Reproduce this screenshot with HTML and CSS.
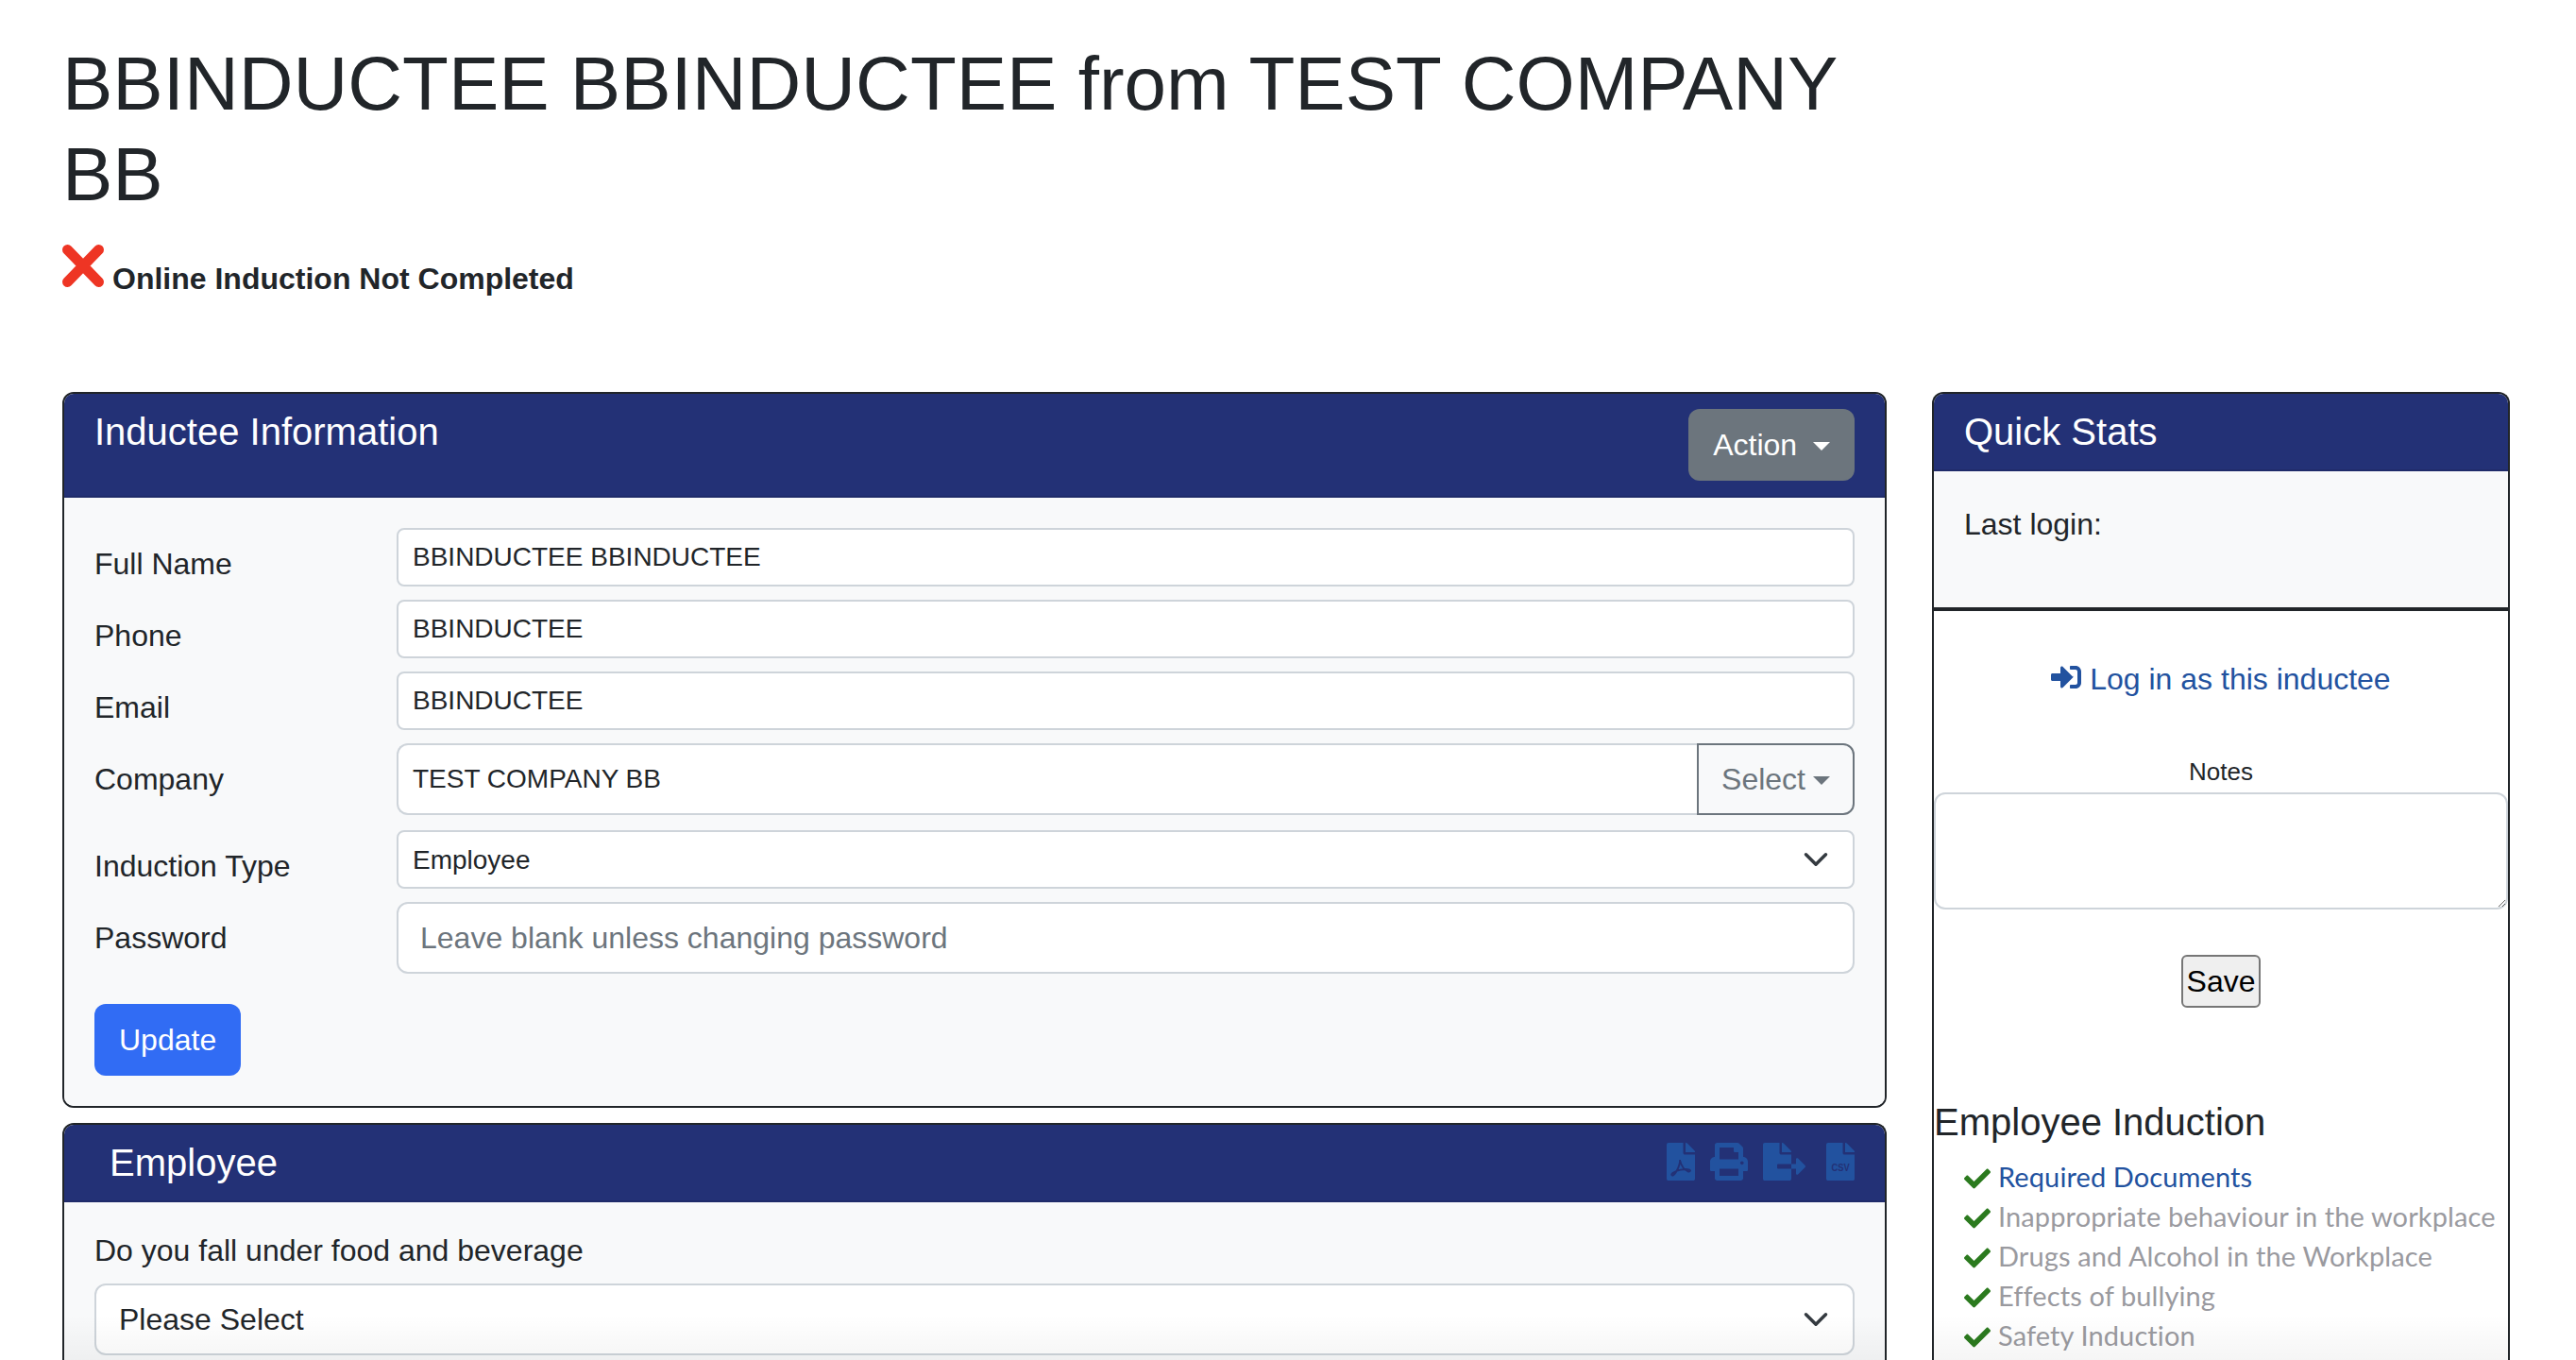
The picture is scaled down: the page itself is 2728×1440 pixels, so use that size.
FILE: index.html
```html
<!DOCTYPE html>
<html lang="en">
<head>
<meta charset="utf-8">
<title>Inductee</title>
<link rel="stylesheet" href="styles.css">
</head>
<body>
<main class="page">
  <header class="intro">
    <h1>BBINDUCTEE BBINDUCTEE from TEST COMPANY BB</h1>
    <p class="status">
      <svg class="status-x" viewBox="0 0 44 45"><path d="M5.5 5.5 38.5 39.5M38.5 5.5 5.5 39.5"/></svg>
      <strong>Online Induction Not Completed</strong>
    </p>
  </header>
  <div class="columns">
    <div class="col-main">
      <section class="card">
        <div class="card-head head-top">
          <h2>Inductee Information</h2>
          <button class="btn btn-grey" type="button">Action <span class="caret"></span></button>
        </div>
        <form class="card-body">
          <div class="row"><label>Full Name</label><input class="ctl ctl-sm" type="text" value="BBINDUCTEE BBINDUCTEE"></div>
          <div class="row"><label>Phone</label><input class="ctl ctl-sm" type="text" value="BBINDUCTEE"></div>
          <div class="row"><label>Email</label><input class="ctl ctl-sm" type="text" value="BBINDUCTEE"></div>
          <div class="row row-group">
            <label>Company</label>
            <div class="group">
              <input class="ctl ctl-sm ctl-group" type="text" value="TEST COMPANY BB">
              <button class="btn btn-outline" type="button">Select<span class="caret"></span></button>
            </div>
          </div>
          <div class="row">
            <label>Induction Type</label>
            <div class="select-wrap">
              <select class="ctl ctl-sm"><option>Employee</option></select>
              <svg class="chev" viewBox="0 0 16 16"><path d="M2 5l6 6 6-6"/></svg>
            </div>
          </div>
          <div class="row"><label>Password</label><input class="ctl ctl-lg ctl-pass" type="password" placeholder="Leave blank unless changing password"></div>
          <button class="btn btn-blue" type="button">Update</button>
        </form>
      </section>

      <section class="card card-open card-second">
        <div class="card-head head-emp">
          <h2>Employee</h2>
          <div class="tools">
            <svg class="tool" viewBox="0 0 384 512"><path d="M224 136V0H24C10.7 0 0 10.7 0 24v464c0 13.3 10.7 24 24 24h336c13.3 0 24-10.7 24-24V160H248c-13.2 0-24-10.8-24-24zM377 105L279.1 7c-4.5-4.5-10.6-7-17-7H256v128h128v-6.1c0-6.3-2.5-12.4-7-16.9z"/><path class="pdf-mark" d="M178 232c12 50-40 170-88 205-22 16-34-10-8-28 52-36 160-62 220-46 30 8 18 34-14 24-50-16-90-80-110-155z"/></svg>
            <svg class="tool" viewBox="0 0 512 512"><path d="M448 192V77.25c0-8.49-3.37-16.62-9.37-22.63L393.37 9.37c-6-6-14.14-9.37-22.63-9.37H96C78.33 0 64 14.33 64 32v160c-35.35 0-64 28.65-64 64v112c0 8.84 7.16 16 16 16h48v96c0 17.67 14.33 32 32 32h320c17.67 0 32-14.33 32-32v-96h48c8.84 0 16-7.16 16-16V256c0-35.35-28.65-64-64-64zm-64 256H128v-96h256v96zm0-224H128V64h192v48c0 8.84 7.16 16 16 16h48v96zm48 72c-13.25 0-24-10.75-24-24 0-13.26 10.75-24 24-24s24 10.74 24 24c0 13.25-10.75 24-24 24z"/></svg>
            <svg class="tool" viewBox="0 0 576 512"><path d="M384 121.9c0-6.3-2.5-12.4-7-16.9L279.1 7c-4.5-4.5-10.6-7-17-7H256v128h128zM571 308l-95.7-96.4c-10.1-10.1-27.4-3-27.4 11.3V288h-64v64h64v65.2c0 14.3 17.3 21.4 27.4 11.3L571 332c6.6-6.6 6.6-17.4 0-24zm-379 28v-32c0-8.8 7.2-16 16-16h176V160H248c-13.2 0-24-10.8-24-24V0H24C10.7 0 0 10.7 0 24v464c0 13.3 10.7 24 24 24h336c13.3 0 24-10.7 24-24V352H208c-8.8 0-16-7.2-16-16z"/></svg>
            <svg class="tool tool-csv" viewBox="0 0 384 512"><path d="M224 136V0H24C10.7 0 0 10.7 0 24v464c0 13.3 10.7 24 24 24h336c13.3 0 24-10.7 24-24V160H248c-13.2 0-24-10.8-24-24zM377 105L279.1 7c-4.5-4.5-10.6-7-17-7H256v128h128v-6.1c0-6.3-2.5-12.4-7-16.9z"/><text class="csv-mark" x="70" y="384" textLength="245" lengthAdjust="spacingAndGlyphs">CSV</text></svg>
          </div>
        </div>
        <div class="card-body body-emp">
          <label class="stack-label">Do you fall under food and beverage</label>
          <div class="select-wrap">
            <select class="ctl ctl-lg"><option>Please Select</option></select>
            <svg class="chev" viewBox="0 0 16 16"><path d="M2 5l6 6 6-6"/></svg>
          </div>
        </div>
      </section>
    </div>

    <aside class="card card-open col-side">
      <div class="card-head"><h2>Quick Stats</h2></div>
      <div class="stats">Last login:</div>
      <div class="side-rest">
        <a class="login-link" href="#">
          <svg class="login-icon" viewBox="0 0 512 512"><path d="M416 448h-84c-6.6 0-12-5.4-12-12v-40c0-6.6 5.4-12 12-12h84c17.7 0 32-14.3 32-32V160c0-17.7-14.3-32-32-32h-84c-6.6 0-12-5.4-12-12V76c0-6.6 5.4-12 12-12h84c53 0 96 43 96 96v192c0 53-43 96-96 96zm-47-201L201 79c-15-15-41-4.5-41 17v96H24c-13.3 0-24 10.7-24 24v80c0 13.3 10.7 24 24 24h136v96c0 21.4 25.9 32 41 17l168-168c9.3-9.4 9.3-24.6 0-34z"/></svg>
          Log in as this inductee
        </a>
        <label class="notes-label">Notes</label>
        <textarea class="notes"></textarea>
        <button class="save" type="button">Save</button>
        <h3>Employee Induction</h3>
        <ul class="checklist">
          <li><svg class="check" viewBox="0 0 512 512"><path d="M173.898 439.404l-166.4-166.4c-9.997-9.997-9.997-26.206 0-36.204l36.203-36.204c9.997-9.998 26.207-9.998 36.204 0L192 312.69 432.095 72.596c9.997-9.997 26.207-9.997 36.204 0l36.203 36.204c9.997 9.997 9.997 26.206 0 36.204l-294.4 294.401c-9.998 9.997-26.207 9.997-36.204-.001z"/></svg><a href="#">Required Documents</a></li>
          <li><svg class="check" viewBox="0 0 512 512"><path d="M173.898 439.404l-166.4-166.4c-9.997-9.997-9.997-26.206 0-36.204l36.203-36.204c9.997-9.998 26.207-9.998 36.204 0L192 312.69 432.095 72.596c9.997-9.997 26.207-9.997 36.204 0l36.203 36.204c9.997 9.997 9.997 26.206 0 36.204l-294.4 294.401c-9.998 9.997-26.207 9.997-36.204-.001z"/></svg>Inappropriate behaviour in the workplace</li>
          <li><svg class="check" viewBox="0 0 512 512"><path d="M173.898 439.404l-166.4-166.4c-9.997-9.997-9.997-26.206 0-36.204l36.203-36.204c9.997-9.998 26.207-9.998 36.204 0L192 312.69 432.095 72.596c9.997-9.997 26.207-9.997 36.204 0l36.203 36.204c9.997 9.997 9.997 26.206 0 36.204l-294.4 294.401c-9.998 9.997-26.207 9.997-36.204-.001z"/></svg>Drugs and Alcohol in the Workplace</li>
          <li><svg class="check" viewBox="0 0 512 512"><path d="M173.898 439.404l-166.4-166.4c-9.997-9.997-9.997-26.206 0-36.204l36.203-36.204c9.997-9.998 26.207-9.998 36.204 0L192 312.69 432.095 72.596c9.997-9.997 26.207-9.997 36.204 0l36.203 36.204c9.997 9.997 9.997 26.206 0 36.204l-294.4 294.401c-9.998 9.997-26.207 9.997-36.204-.001z"/></svg>Effects of bullying</li>
          <li><svg class="check" viewBox="0 0 512 512"><path d="M173.898 439.404l-166.4-166.4c-9.997-9.997-9.997-26.206 0-36.204l36.203-36.204c9.997-9.998 26.207-9.998 36.204 0L192 312.69 432.095 72.596c9.997-9.997 26.207-9.997 36.204 0l36.203 36.204c9.997 9.997 9.997 26.206 0 36.204l-294.4 294.401c-9.998 9.997-26.207 9.997-36.204-.001z"/></svg>Safety Induction</li>
        </ul>
      </div>
    </aside>
  </div>
</main>
</body>
</html>
```

FILE: styles.css
```css
* { box-sizing: border-box; }
html, body { margin: 0; height: 1440px; overflow: hidden; }
body {
  background: #fff;
  color: #212529;
  font-family: "Liberation Sans", Arial, sans-serif;
  font-size: 32px;
  line-height: 48px;
}
.page { height: 1440px; display: flex; flex-direction: column; padding: 41px 70px 0 66px; }
.intro { flex: none; max-width: 1932px; height: 374px; }
h1 { margin: 0; font-size: 80px; line-height: 96px; font-weight: 400; }
.status { margin: 26px 0 0; display: flex; align-items: flex-start; gap: 9px; }
.status strong { margin-top: 12px; }
.status-x { width: 44px; height: 45px; fill: none; stroke: #ee3524; stroke-width: 11; stroke-linecap: round; }

.columns { flex: 1; min-height: 0; display: grid; grid-template-columns: 1932px 612px; column-gap: 48px; }
.col-main { display: flex; flex-direction: column; gap: 16px; min-height: 0; }

.card { position: relative; background: #fff; border: 2px solid #212529; border-radius: 12px; overflow: hidden; }
.card-open { border-bottom: 0; border-radius: 12px 12px 0 0; }
.card-open::after {
  content: "";
  position: absolute;
  left: 0;
  right: 0;
  bottom: 0;
  height: 48px;
  background: linear-gradient(to bottom, rgba(0, 0, 0, 0), rgba(0, 0, 0, .04));
  pointer-events: none;
}
.card-second { flex: 1; min-height: 0; }
.card-head {
  display: flex;
  justify-content: space-between;
  align-items: flex-start;
  padding: 16px 32px;
  background: #233176;
  border-bottom: 2px solid #1f2b69;
  color: #fff;
}
.card-head h2 { margin: 0; font-size: 40px; line-height: 48px; font-weight: 400; }
.head-emp { padding-left: 48px; }
.card-body { display: flex; flex-direction: column; align-items: flex-start; background: #f8f9fa; padding: 32px; }

.row { display: flex; width: 100%; height: 76px; align-items: flex-start; }
.row > label { flex: 0 0 320px; line-height: 76px; }
.row-group { height: 92px; }
.row > .ctl, .group, .row > .select-wrap { flex: 1; }

.ctl {
  display: block;
  width: 100%;
  margin: 0;
  background: #fff;
  border: 2px solid #ced4da;
  border-radius: 8px;
  color: #212529;
  font-family: inherit;
  outline: none;
  appearance: none;
}
.ctl-sm { height: 62px; padding: 0 15px; font-size: 28px; }
.ctl-lg { height: 76px; padding: 0 24px; font-size: 32px; border-radius: 12px; }
.ctl-pass { padding: 0 23px; }
.ctl::placeholder { color: #6c757d; opacity: 1; }
.group { display: flex; height: 76px; }
.ctl-group { flex: 1; height: 76px; border-right: 0; border-radius: 12px 0 0 12px; }

.select-wrap { position: relative; width: 100%; }
.chev { position: absolute; top: 17px; right: 27px; width: 28px; height: 28px; fill: none; stroke: #343a40; stroke-width: 2; stroke-linecap: round; stroke-linejoin: round; }
.select-wrap .ctl-lg + .chev { top: 24px; }

.btn {
  height: 76px;
  padding: 0 24px;
  border: 2px solid transparent;
  border-radius: 12px;
  font: inherit;
  white-space: nowrap;
}
.btn-grey { background: #6c757d; color: #fff; }
.btn-blue { margin-top: 32px; background: #316cf4; color: #fff; }
.btn-outline { width: 167px; background: transparent; border-color: #6c757d; border-radius: 0 12px 12px 0; color: #6c757d; padding: 0; }
.caret {
  display: inline-block;
  margin-left: 8px;
  vertical-align: 5px;
  border-top: 9px solid currentColor;
  border-left: 9px solid transparent;
  border-right: 9px solid transparent;
}

.tools { display: flex; align-items: center; height: 46px; }
.tool { height: 40px; fill: #22529f; margin-left: 16px; display: block; }
.tool:nth-child(1), .tool:nth-child(4) { width: 30px; }
.tool:nth-child(2) { width: 40px; }
.tool:nth-child(3) { width: 45px; }
.tool-csv { margin-left: 22px; }
.pdf-mark { fill: none; stroke: #233176; stroke-width: 24; }
.csv-mark { fill: #233176; font-family: "Liberation Sans", Arial, sans-serif; font-weight: 700; font-size: 148px; }
.body-emp { height: 100%; padding-top: 27px; }
.stack-label { margin-bottom: 11px; }

.stats { height: 148px; padding: 32px 32px 0; background: #f8f9fa; border-bottom: 4px solid #212529; }
.side-rest { display: flex; flex-direction: column; padding-top: 48px; }
.login-link { align-self: center; color: #22529f; text-decoration: none; white-space: nowrap; }
.login-icon { width: 32px; height: 32px; fill: #22529f; vertical-align: -3px; }
.notes-label { margin-top: 54px; text-align: center; font-size: 26px; line-height: 40px; }
.notes { display: block; width: 100%; height: 124px; margin-top: 2px; background: #fff; border: 2px solid #ced4da; border-radius: 12px; outline: none; }
.save {
  align-self: center;
  height: 56px;
  margin-top: 48px;
  padding: 2px 4px;
  background: #efefef;
  border: 2px solid #767676;
  border-radius: 6px;
  color: #000;
  font: inherit;
}
h3 { margin: 97px 0 0; font-size: 40px; line-height: 48px; font-weight: 400; }
.checklist { margin: 13px 0 0; padding: 0 0 0 32px; list-style: none; font-family: Lato, sans-serif; font-size: 29px; letter-spacing: .11px; line-height: 42px; color: #9a9a9f; white-space: nowrap; }
.checklist a { color: #22529f; text-decoration: none; }
.check { width: 28px; height: 28px; margin-right: 8px; fill: #2b7a1e; vertical-align: -5px; }
```
